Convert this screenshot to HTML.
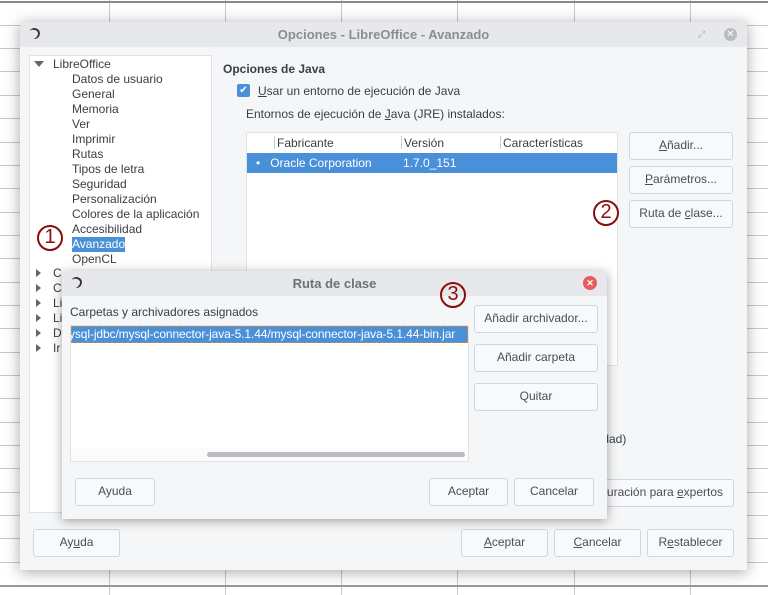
<!DOCTYPE html><html><head><style>
*{box-sizing:border-box;margin:0;padding:0}
body{width:768px;height:595px;overflow:hidden;background:#fff;font-family:"Liberation Sans",sans-serif;font-size:12px;color:#3a3d42;position:relative}
.a{position:absolute}
.vl{position:absolute;top:0;width:1px;height:595px;background:#c8c8c8}
.hl{position:absolute;left:0;width:768px;height:1px;background:#c8c8c8}
.t{position:absolute;white-space:nowrap;line-height:15px}
.btn{position:absolute;border:1px solid #cfd6e0;border-radius:3px;background:#f8f9fb;text-align:center;line-height:25px;color:#4a4d52}
.circ{position:absolute;width:26px;height:26px;border:2.5px solid #8a0d0d;border-radius:50%;text-align:center;line-height:21px;font-size:20px;color:#8a0d0d;background:transparent}
.tri{position:absolute;width:0;height:0;border-top:4px solid transparent;border-bottom:4px solid transparent;border-left:5px solid #666}
</style></head><body>
<div class="vl" style="left:109px"></div><div class="vl" style="left:225px"></div><div class="vl" style="left:341px"></div><div class="vl" style="left:457px"></div><div class="vl" style="left:574px"></div><div class="vl" style="left:690px"></div>
<div class="hl" style="top:1px;height:2px;background:#888"></div>
<div class="hl" style="top:25px"></div><div class="hl" style="top:48px"></div><div class="hl" style="top:71px"></div><div class="hl" style="top:95px"></div><div class="hl" style="top:118px"></div><div class="hl" style="top:142px"></div><div class="hl" style="top:165px"></div><div class="hl" style="top:188px"></div><div class="hl" style="top:212px"></div><div class="hl" style="top:235px"></div><div class="hl" style="top:258px"></div><div class="hl" style="top:282px"></div><div class="hl" style="top:305px"></div><div class="hl" style="top:328px"></div><div class="hl" style="top:352px"></div><div class="hl" style="top:375px"></div><div class="hl" style="top:398px"></div><div class="hl" style="top:422px"></div><div class="hl" style="top:445px"></div><div class="hl" style="top:468px"></div><div class="hl" style="top:492px"></div><div class="hl" style="top:515px"></div><div class="hl" style="top:538px"></div><div class="hl" style="top:562px"></div><div class="hl" style="top:585px;height:2px;background:#999"></div>

<!-- main dialog -->
<div class="a" style="left:20px;top:22px;width:727px;height:548px;background:#f5f6f7;box-shadow:0 2px 14px rgba(0,0,0,.35)">
 <div class="a" style="left:0;top:0;width:727px;height:25px;background:#e7e8eb"></div>
 <div class="t" style="left:0;width:727px;text-align:center;top:5px;font-weight:bold;color:#8a8d92;font-size:13px">Opciones - LibreOffice - Avanzado</div>
 <div class="a" style="left:9px;top:6px;width:11px;height:11px;border-radius:50%;border-top:2px solid #333;border-right:2px solid #333;transform:rotate(20deg)"></div>
 <div class="a" style="left:704px;top:6px;width:13px;height:13px;border-radius:50%;background:#b8bbc0;color:#fff;font-size:10px;line-height:13px;text-align:center">✕</div>
 <div class="t" style="left:678px;top:5px;color:#aaa;font-size:9px">⤢</div>
</div>
<!-- tree -->
<div class="a" style="left:29px;top:55px;width:183px;height:458px;background:#fff;border:1px solid #dfe2e6"></div>
<div class="a" style="left:34px;top:61px;width:0;height:0;border-left:5px solid transparent;border-right:5px solid transparent;border-top:6px solid #666"></div>
<div class="t" style="left:53px;top:57px">LibreOffice</div>
<div class="t" style="left:72px;top:72px">Datos de usuario</div>
<div class="t" style="left:72px;top:87px">General</div>
<div class="t" style="left:72px;top:102px">Memoria</div>
<div class="t" style="left:72px;top:117px">Ver</div>
<div class="t" style="left:72px;top:132px">Imprimir</div>
<div class="t" style="left:72px;top:147px">Rutas</div>
<div class="t" style="left:72px;top:162px">Tipos de letra</div>
<div class="t" style="left:72px;top:177px">Seguridad</div>
<div class="t" style="left:72px;top:192px">Personalización</div>
<div class="t" style="left:72px;top:207px">Colores de la aplicación</div>
<div class="t" style="left:72px;top:222px">Accesibilidad</div>
<div class="t" style="left:72px;top:237px;background:#4a90d9;color:#fff">Avanzado</div>
<div class="t" style="left:72px;top:252px">OpenCL</div>
<div class="tri" style="left:36px;top:269px"></div><div class="t" style="left:53px;top:266px">C</div>
<div class="tri" style="left:36px;top:284px"></div><div class="t" style="left:53px;top:281px">C</div>
<div class="tri" style="left:36px;top:299px"></div><div class="t" style="left:53px;top:296px">Li</div>
<div class="tri" style="left:36px;top:314px"></div><div class="t" style="left:53px;top:311px">Li</div>
<div class="tri" style="left:36px;top:329px"></div><div class="t" style="left:53px;top:326px">D</div>
<div class="tri" style="left:36px;top:344px"></div><div class="t" style="left:53px;top:341px">Ir</div>
<div class="circ" style="left:37px;top:225px">1</div>

<!-- right -->
<div class="t" style="left:223px;top:62px;font-weight:bold">Opciones de Java</div>
<div class="a" style="left:237px;top:84px;width:13px;height:13px;background:#4a90d9;border-radius:2px;color:#fff;font-size:10px;line-height:13px;text-align:center">✔</div>
<div class="t" style="left:258px;top:84px"><u>U</u>sar un entorno de ejecución de Java</div>
<div class="t" style="left:246px;top:107px">Entornos de ejecución de <u>J</u>ava (JRE) instalados:</div>
<div class="a" style="left:246px;top:132px;width:372px;height:234px;background:#fff;border:1px solid #dfe2e6"></div>
<div class="a" style="left:274px;top:136px;width:1px;height:13px;background:#ccc"></div>
<div class="a" style="left:401px;top:136px;width:1px;height:13px;background:#ccc"></div>
<div class="a" style="left:500px;top:136px;width:1px;height:13px;background:#ccc"></div>
<div class="t" style="left:277px;top:136px">Fabricante</div>
<div class="t" style="left:404px;top:136px">Versión</div>
<div class="t" style="left:503px;top:136px">Características</div>
<div class="a" style="left:247px;top:153px;width:370px;height:20px;background:#4a90d9"></div>
<div class="t" style="left:256px;top:156px;color:#fff">•&nbsp;&nbsp;&nbsp;Oracle Corporation</div>
<div class="t" style="left:403px;top:156px;color:#fff">1.7.0_151</div>
<div class="btn" style="left:629px;top:132px;width:104px;height:28px"><u>A</u>ñadir...</div>
<div class="btn" style="left:629px;top:166px;width:104px;height:28px"><u>P</u>arámetros...</div>
<div class="btn" style="left:629px;top:200px;width:104px;height:28px">Ruta de <u>c</u>lase...</div>
<div class="circ" style="left:593px;top:200px">2</div>
<div class="t" style="left:597px;top:432px">lidad)</div>
<div class="btn" style="left:580px;top:479px;width:154px;height:28px;text-align:right;padding-right:10px">uración para <u>e</u>xpertos</div>
<div class="btn" style="left:33px;top:529px;width:87px;height:28px">Ay<u>u</u>da</div>
<div class="btn" style="left:461px;top:529px;width:87px;height:28px"><u>A</u>ceptar</div>
<div class="btn" style="left:554px;top:529px;width:87px;height:28px"><u>C</u>ancelar</div>
<div class="btn" style="left:647px;top:529px;width:87px;height:28px">R<u>e</u>stablecer</div>

<!-- sub dialog -->
<div class="a" style="left:62px;top:271px;width:545px;height:248px;background:#f5f6f7;box-shadow:0 2px 10px rgba(0,0,0,.35)">
 <div class="a" style="left:0;top:0;width:545px;height:25px;background:#e7e8eb"></div>
 <div class="t" style="left:0;width:545px;text-align:center;top:5px;font-weight:bold;color:#6e7176;font-size:13px">Ruta de clase</div>
 <div class="a" style="left:9px;top:6px;width:11px;height:11px;border-radius:50%;border-top:2px solid #333;border-right:2px solid #333;transform:rotate(20deg)"></div>
 <div class="a" style="left:521px;top:5px;width:14px;height:14px;border-radius:50%;background:#e85c5c;color:#fff;font-size:9px;line-height:14px;text-align:center;font-weight:bold">✕</div>
</div>
<div class="t" style="left:70px;top:305px">Carpetas y archivadores asignados</div>
<div class="a" style="left:70px;top:325px;width:399px;height:137px;background:#fff;border:1px solid #dfe2e6;overflow:hidden">
 <div class="a" style="left:0;top:0;width:397px;height:17px;background:#4a90d9;border:1px dashed #d08a30"></div>
 <div class="t" style="left:-2px;top:1px;color:#fff;letter-spacing:-0.1px">ysql-jdbc/mysql-connector-java-5.1.44/mysql-connector-java-5.1.44-bin.jar</div>
 <div class="a" style="left:0;top:122px;width:397px;height:13px;background:#fbfbfb"></div>
 <div class="a" style="left:136px;top:126px;width:258px;height:5px;background:#b9bcc0;border-radius:3px"></div>
</div>
<div class="btn" style="left:474px;top:305px;width:124px;height:28px">Añadir archivador...</div>
<div class="btn" style="left:474px;top:344px;width:124px;height:28px">Añadir carpeta</div>
<div class="btn" style="left:474px;top:383px;width:124px;height:28px">Quitar</div>
<div class="btn" style="left:75px;top:478px;width:80px;height:28px">Ayuda</div>
<div class="btn" style="left:429px;top:478px;width:79px;height:28px">Aceptar</div>
<div class="btn" style="left:514px;top:478px;width:80px;height:28px">Cancelar</div>
<div class="circ" style="left:440px;top:282px">3</div>
</body></html>
